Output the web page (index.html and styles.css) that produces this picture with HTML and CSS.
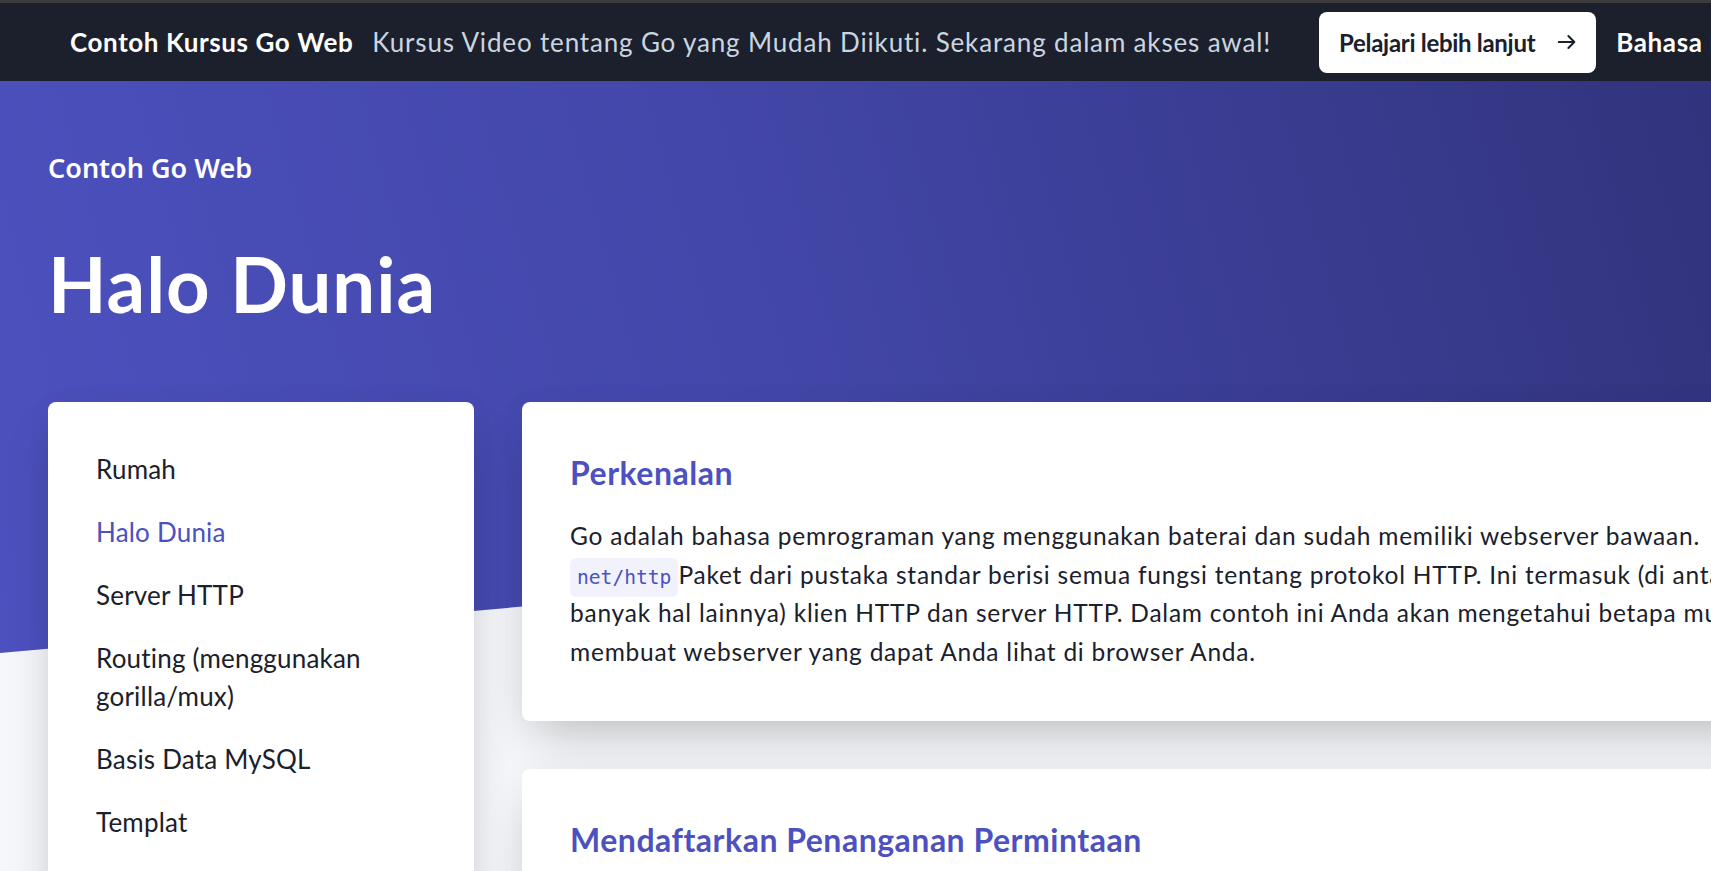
FILE: index.html
```html
<!DOCTYPE html>
<html lang="id">
<head>
<meta charset="utf-8">
<title>Halo Dunia - Contoh Go Web</title>
<link rel="stylesheet" href="styles.css">
</head>
<body>
<div class="promo">
  <strong class="promo-title">Contoh Kursus Go Web</strong>
  <span class="promo-text">Kursus Video tentang Go yang Mudah Diikuti. Sekarang dalam akses awal!</span>
  <a class="promo-btn" href="#">Pelajari lebih lanjut
    <svg class="arrow" width="22" height="22" viewBox="0 0 24 24" fill="none" stroke="currentColor" stroke-width="2.2" stroke-linecap="round" stroke-linejoin="round"><path d="M3 12h17M13.5 5.5 20 12l-6.5 6.5"/></svg>
  </a>
  <span class="promo-lang">Bahasa Indonesia</span>
</div>
<div class="page">
  <header class="hero">
    <p class="site-name">Contoh Go Web</p>
    <h1 class="hero-title">Halo Dunia</h1>
  </header>
  <div class="layout">
    <nav class="sidebar">
      <a href="#">Rumah</a>
      <a href="#" class="active">Halo Dunia</a>
      <a href="#">Server HTTP</a>
      <a href="#">Routing (menggunakan gorilla/mux)</a>
      <a href="#">Basis Data MySQL</a>
      <a href="#">Templat</a>
      <a href="#">Aset dan File Statis</a>
      <a href="#">Formulir</a>
      <a href="#">Middleware (Dasar)</a>
    </nav>
    <main class="content">
      <section class="card">
        <h2>Perkenalan</h2>
        <p>Go adalah bahasa pemrograman yang menggunakan baterai dan sudah memiliki webserver bawaan. <code>net/http</code>Paket dari pustaka standar berisi semua fungsi tentang protokol HTTP. Ini termasuk (di antara banyak hal lainnya) klien HTTP dan server HTTP. Dalam contoh ini Anda akan mengetahui betapa mudah membuat webserver yang dapat Anda lihat di browser Anda.</p>
      </section>
      <section class="card">
        <h2>Mendaftarkan Penanganan Permintaan</h2>
        <p>Pertama, buat Handler yang menerima semua koneksi HTTP masuk dari browser, klien HTTP, atau permintaan API.</p>
      </section>
    </main>
  </div>
</div>
</body>
</html>
```
FILE: styles.css
```css
* { box-sizing: border-box; }
html, body { margin: 0; }
body {
  font-family: Lato, "Noto Sans", sans-serif;
  background: #f5f7fa;
  color: #1a202c;
  overflow: hidden;
}

/* promo bar */
.promo {
  height: 81px;
  border-top: 3px solid #3c3c3c;
  background: #1b202c;
  display: flex;
  align-items: center;
  padding-left: 70px;
  white-space: nowrap;
  overflow: hidden;
}
.promo-title { font-size: 26px; font-weight: 700; color: #fff; margin-right: 19px; letter-spacing: 0.6px; }
.promo-text { font-size: 26px; color: #cbd5e0; margin-right: 48px; letter-spacing: 0.84px; }
.promo-btn {
  flex-shrink: 0;
  display: flex;
  align-items: center;
  gap: 21px;
  height: 61px;
  padding: 0 18px 0 20px;
  background: #fff;
  border-radius: 8px;
  color: #1a202c;
  font-size: 24px;
  font-weight: 700;
  letter-spacing: -0.3px;
  text-decoration: none;
  margin-right: 20px;
}
.promo-lang { font-size: 26px; font-weight: 700; color: #fff; letter-spacing: 0.6px; }

/* hero */
.page { position: relative; }
.page::before {
  content: "";
  position: absolute;
  left: 0; top: 0;
  width: 100%;
  height: 572px;
  background: linear-gradient(75deg, #4c51bf 0%, #4347a9 45%, #32337d 100%);
  clip-path: polygon(0 0, 100% 0, 100% 420px, 0 100%);
}
.hero { position: relative; padding: 67px 48px 0; color: #fff; }
.site-name {
  margin: 0;
  font-family: "Noto Sans", sans-serif;
  font-weight: 600;
  font-size: 27px;
  line-height: 40px;
}
.hero-title { margin: 51px 0 0; font-size: 76px; line-height: 89px; font-weight: 700; letter-spacing: 1px; }

/* layout */
.layout {
  position: relative;
  display: grid;
  grid-template-columns: 426px 1305px;
  gap: 48px;
  padding: 0 48px;
  margin-top: 74px;
  align-items: start;
}
.sidebar, .card {
  background: #fff;
  border-radius: 8px;
  padding: 48px;
  box-shadow: 0 25px 50px -12px rgba(0,0,0,.22), 0 0 30px rgba(0,0,0,.03);
}
.sidebar { display: flex; flex-direction: column; gap: 25px; }
.sidebar a { font-size: 26px; line-height: 38px; color: #1a202c; text-decoration: none; letter-spacing: 0.2px; }
.sidebar a.active { color: #4c51bf; }

.content { display: flex; flex-direction: column; gap: 48px; }
.card { padding-bottom: 50px; }
.card h2 { margin: 0; font-size: 32px; line-height: 46px; font-weight: 700; color: #4c51bf; letter-spacing: 0.5px; }
.card p { margin: 21px 0 0; font-size: 24.5px; line-height: 38.5px; letter-spacing: 0.77px; }
.card code {
  font-family: "DejaVu Sans Mono", monospace;
  font-size: 19.6px;
  line-height: 1;
  letter-spacing: 0;
  color: #4c51bf;
  background: #f2f2fd;
  padding: 8px 7px;
  border-radius: 6px;
}
```
